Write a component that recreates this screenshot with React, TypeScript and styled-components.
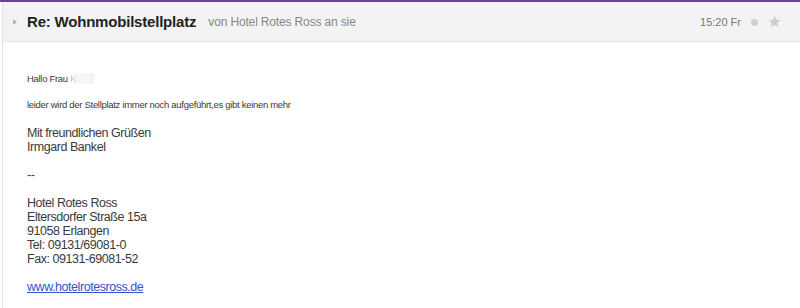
import * as React from 'react';
import styled, { createGlobalStyle } from 'styled-components';

const GlobalStyle = createGlobalStyle`
  html, body {
    margin: 0;
    padding: 0;
    background: #fff;
    overflow: hidden;
  }
  body {
    font-family: "Liberation Sans", Arial, sans-serif;
  }
`;

export const Root = styled.div`
  width: 800px;
  height: 308px;
  overflow: hidden;
  display: flex;
  flex-direction: column;
`;

export const AccentBar = styled.div`
  height: 2px;
  background: #6a3f9f;
  flex: none;
`;

export const Frame = styled.div`
  flex: 1;
  margin-left: 2px;
  border-left: 1px solid #e2e2e2;
  display: flex;
  flex-direction: column;
`;

export const Header = styled.div`
  height: 39px;
  flex: none;
  display: flex;
  align-items: center;
  padding: 0 19px 0 10px;
  background: #f3f3f3;
  border-bottom: 1px solid #e6e6e6;
`;

export const Expander = styled.span`
  width: 0;
  height: 0;
  border-top: 3.5px solid transparent;
  border-bottom: 3.5px solid transparent;
  border-left: 4px solid #b4b4b4;
  margin: 1px 10px 0 0;
`;

export const Subject = styled.h2`
  margin: 0;
  font-size: 15px;
  font-weight: bold;
  color: #222;
  letter-spacing: -0.2px;
`;

export const Meta = styled.span`
  margin-left: 12px;
  font-size: 12px;
  letter-spacing: -0.15px;
  color: #888;
  margin-top: 1px;
`;

export const Spacer = styled.div`
  flex: 1;
`;

export const Time = styled.span`
  font-size: 11px;
  color: #777;
  margin-top: 1px;
`;

export const ReadDot = styled.span`
  width: 7px;
  height: 7px;
  border-radius: 50%;
  background: #cfcfcf;
  margin: 2px 0 0 10px;
`;

export const StarIcon = styled.svg`
  width: 13px;
  height: 13px;
  margin: 0 0 0 10px;
`;

export const Body = styled.div`
  padding: 30px 0 0 24px;
  color: #3a3a3a;
`;

export const SmallLine = styled.p<{ $gap?: number }>`
  margin: ${p => p.$gap ?? 0}px 0 0;
  font-size: 9.5px;
  letter-spacing: -0.3px;
  line-height: 14px;
`;

export const Redacted = styled.span`
  color: #c8c8c8;
  filter: blur(0.6px);
  padding-right: 18px;
  background: linear-gradient(90deg, #fafafa, #f4f4f6);
`;

export const Signature = styled.div`
  margin-top: 14px;
  font-size: 12.5px;
  letter-spacing: -0.45px;
  line-height: 14px;
`;

export const Line = styled.div`
  min-height: 14px;
`;

export const Link = styled.a`
  color: #3552c9;
  text-decoration: underline;
`;

const Star = () => (
  <StarIcon viewBox="0 0 24 24">
    <path
      d="M12 1.5l3.1 7.2 7.8.6-5.9 5.1 1.8 7.6L12 18l-6.8 4 1.8-7.6-5.9-5.1 7.8-.6z"
      fill="#cdcdcd"
    />
  </StarIcon>
);

const signature = [
  'Mit freundlichen Grüßen',
  'Irmgard Bankel',
  '',
  '--',
  '',
  'Hotel Rotes Ross',
  'Eltersdorfer Straße 15a',
  '91058 Erlangen',
  'Tel: 09131/69081-0',
  'Fax: 09131-69081-52',
  '',
];

const App: React.FC = () => (
  <Root>
    <GlobalStyle />
    <AccentBar />
    <Frame>
      <Header>
        <Expander />
        <Subject>Re: Wohnmobilstellplatz</Subject>
        <Meta>von Hotel Rotes Ross an sie</Meta>
        <Spacer />
        <Time>15:20 Fr</Time>
        <ReadDot />
        <Star />
      </Header>
      <Body>
        <SmallLine>
          Hallo Frau <Redacted>K</Redacted>
        </SmallLine>
        <SmallLine $gap={12}>
          leider wird der Stellplatz immer noch aufgeführt,es gibt keinen mehr
        </SmallLine>
        <Signature>
          {signature.map((text, i) => (
            <Line key={i}>{text}</Line>
          ))}
          <Line>
            <Link href="#">www.hotelrotesross.de</Link>
          </Line>
        </Signature>
      </Body>
    </Frame>
  </Root>
);

export default App;
